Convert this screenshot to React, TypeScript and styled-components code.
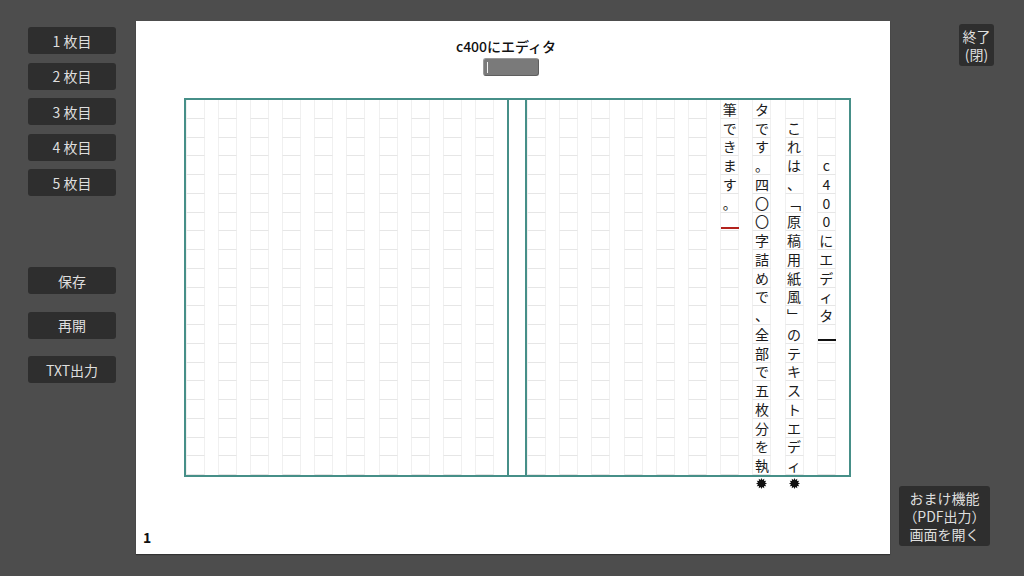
import React from "react";
import styled, { createGlobalStyle } from "styled-components";

const GlobalStyle = createGlobalStyle`
  html, body {
    margin: 0;
    padding: 0;
    background: #4d4d4d;
  }
  body {
    font-family: "Noto Sans CJK JP", "Noto Sans", sans-serif;
  }
  * {
    box-sizing: border-box;
  }
`;

const Screen = styled.div`
  width: 1024px;
  height: 576px;
  display: flex;
  background: #4d4d4d;
  overflow: hidden;
`;

const SideBar = styled.div`
  width: 136px;
  flex-shrink: 0;
  display: flex;
  flex-direction: column;
  padding: 27px 0 0 28px;
`;

const ButtonGroup = styled.div<{ $gap: number; $top?: number }>`
  display: flex;
  flex-direction: column;
  gap: ${p => p.$gap}px;
  margin-top: ${p => p.$top || 0}px;
`;

const SideButton = styled.div`
  width: 88px;
  height: 27px;
  border-radius: 3px;
  background: #2e2e2e;
  color: #dedede;
  font-size: 14px;
  display: flex;
  align-items: center;
  justify-content: center;
  white-space: pre;
`;

const Paper = styled.div`
  width: 754px;
  height: 533px;
  margin-top: 21px;
  background: #fff;
  box-shadow: 0 1px 1px rgba(0, 0, 0, 0.35);
  display: flex;
  flex-direction: column;
  padding-top: 15px;
`;

const Header = styled.div`
  display: flex;
  flex-direction: column;
  align-items: center;
  padding-right: 4px;
`;

const Title = styled.div`
  font-size: 14px;
  font-weight: 500;
  line-height: 20px;
  color: #111;
  margin-right: 10px;
`;

const TitleField = styled.div`
  position: relative;
  width: 56px;
  height: 18px;
  margin-top: 2px;
  border-radius: 3px;
  background: #7a7a7a;
  border: 1px solid #5e5e5e;
  border-top-color: #9a9a9a;
  border-left-color: #9a9a9a;

  &::before {
    content: "";
    position: absolute;
    left: 3px;
    top: 3px;
    width: 1px;
    height: 11px;
    background: #f2f2f2;
  }
`;

const Sheet = styled.div`
  width: 667px;
  height: 379px;
  margin: 22px 0 0 48px;
  border: 2px solid #468f88;
  display: flex;
`;

const Half = styled.div<{ $width: number }>`
  width: ${p => p.$width}px;
  height: 100%;
  display: grid;
  grid-template-columns: repeat(10, 1fr);
`;

const Fold = styled.div`
  width: 16px;
  height: 100%;
  border-left: 2px solid #468f88;
  border-right: 2px solid #468f88;
  box-sizing: content-box;
`;

const Column = styled.div`
  position: relative;
  width: 19px;
  height: 100%;
  display: grid;
  grid-template-rows: repeat(20, 1fr);
`;

const Cell = styled.div`
  position: relative;
  border-left: 1px solid #f0f0f0;
  border-right: 1px solid #f0f0f0;
  border-bottom: 1px solid #e6e6e6;
  display: flex;
  align-items: center;
  justify-content: center;
  font-size: 14px;
  line-height: 1;
  color: #1c1c1c;
`;

const Caret = styled.div<{ $color: string }>`
  position: absolute;
  left: 0;
  right: -1px;
  top: 14px;
  height: 2px;
  background: ${p => p.$color};
`;

const Overflow = styled.svg`
  position: absolute;
  left: 4px;
  top: calc(100% + 3px);
  width: 11px;
  height: 11px;
`;

const Footer = styled.div`
  margin-top: auto;
  padding: 0 0 8px 7px;
  font-size: 14px;
  font-weight: 700;
  line-height: 18px;
  color: #111;
`;

const RightBar = styled.div`
  flex: 1;
  display: flex;
  flex-direction: column;
  justify-content: space-between;
  align-items: flex-end;
  padding: 24px 0 30px;
`;

const CornerButton = styled.div<{ $width: number; $right: number }>`
  width: ${p => p.$width}px;
  margin-right: ${p => p.$right}px;
  padding: 3px 0;
  border-radius: 3px;
  background: #2e2e2e;
  color: #dedede;
  font-size: 14px;
  line-height: 18px;
  text-align: center;
  white-space: nowrap;
`;

type ColumnData = {
  text: string;
  caret?: { row: number; color: string };
  overflow?: boolean;
};

const vertical: Record<string, string> = { "「": "﹁", "」": "﹂" };

// right half, listed from the rightmost column leftwards
const written: ColumnData[] = [
  { text: "   c400にエディタ", caret: { row: 12, color: "#111" } },
  { text: " これは、「原稿用紙風」のテキストエディ", overflow: true },
  { text: "タです。四〇〇字詰めで、全部で五枚分を執", overflow: true },
  { text: "筆できます。", caret: { row: 6, color: "#b3221d" } },
];

function StarMark() {
  const pts: string[] = [];
  for (let i = 0; i < 24; i++) {
    const a = (i * Math.PI) / 12;
    const r = i % 2 === 0 ? 5.5 : 3.6;
    pts.push(`${5.5 + r * Math.sin(a)},${5.5 - r * Math.cos(a)}`);
  }
  return (
    <Overflow viewBox="0 0 11 11">
      <polygon points={pts.join(" ")} fill="#111" />
    </Overflow>
  );
}

function GridColumn({ data }: { data?: ColumnData }) {
  const chars = Array.from(data ? data.text : "");
  return (
    <Column>
      {Array.from({ length: 20 }).map((_, row) => {
        const ch = chars[row];
        return (
          <Cell key={row}>
            {ch && ch !== " " ? vertical[ch] || ch : null}
            {data?.caret && data.caret.row === row && (
              <Caret $color={data.caret.color} />
            )}
          </Cell>
        );
      })}
      {data?.overflow && <StarMark />}
    </Column>
  );
}

function App() {
  const sheets = ["1 枚目", "2 枚目", "3 枚目", "4 枚目", "5 枚目"];

  return (
    <>
      <GlobalStyle />
      <Screen>
        <SideBar>
          <ButtonGroup $gap={8.5}>
            {sheets.map(s => (
              <SideButton key={s}>{s}</SideButton>
            ))}
          </ButtonGroup>
          <ButtonGroup $gap={17.5} $top={71}>
            <SideButton>保存</SideButton>
            <SideButton>再開</SideButton>
            <SideButton>TXT出力</SideButton>
          </ButtonGroup>
        </SideBar>

        <Paper>
          <Header>
            <Title>c400にエディタ</Title>
            <TitleField />
          </Header>

          <Sheet>
            <Half $width={321}>
              {Array.from({ length: 10 }).map((_, i) => (
                <GridColumn key={i} />
              ))}
            </Half>
            <Fold />
            <Half $width={322}>
              {Array.from({ length: 10 }).map((_, i) => (
                <GridColumn key={i} data={written[9 - i]} />
              ))}
            </Half>
          </Sheet>

          <Footer>1</Footer>
        </Paper>

        <RightBar>
          <CornerButton $width={35} $right={30}>
            終了
            <br />
            (閉)
          </CornerButton>
          <CornerButton $width={91} $right={34}>
            おまけ機能
            <br />
            （PDF出力）
            <br />
            画面を開く
          </CornerButton>
        </RightBar>
      </Screen>
    </>
  );
}

export default App;
